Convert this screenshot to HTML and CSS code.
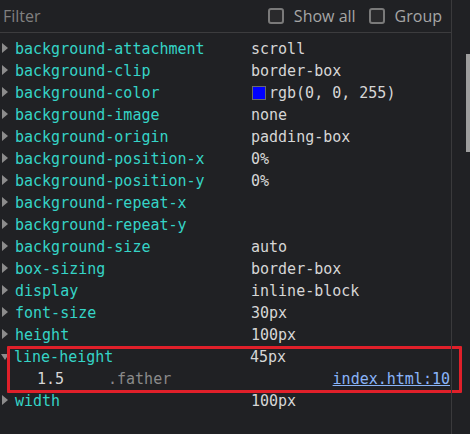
FILE: index.html
```html
<!DOCTYPE html>
<html>
<head>
<meta charset="utf-8">
<link rel="stylesheet" href="styles.css">
</head>
<body>
<div class="panel">
  <div class="main">
    <div class="toolbar">
      <span class="filter">Filter</span>
      <label class="check"><span class="box"></span>Show all</label>
      <label class="check"><span class="box"></span>Group</label>
    </div>
    <div class="list">
      <div class="row"><span class="tri"></span><span class="name">background-attachment</span><span class="val">scroll</span></div>
      <div class="row"><span class="tri"></span><span class="name">background-clip</span><span class="val">border-box</span></div>
      <div class="row"><span class="tri"></span><span class="name">background-color</span><span class="val"><span class="swatch"></span>rgb(0, 0, 255)</span></div>
      <div class="row"><span class="tri"></span><span class="name">background-image</span><span class="val">none</span></div>
      <div class="row"><span class="tri"></span><span class="name">background-origin</span><span class="val">padding-box</span></div>
      <div class="row"><span class="tri"></span><span class="name">background-position-x</span><span class="val">0%</span></div>
      <div class="row"><span class="tri"></span><span class="name">background-position-y</span><span class="val">0%</span></div>
      <div class="row"><span class="tri"></span><span class="name">background-repeat-x</span><span class="val"></span></div>
      <div class="row"><span class="tri"></span><span class="name">background-repeat-y</span><span class="val"></span></div>
      <div class="row"><span class="tri"></span><span class="name">background-size</span><span class="val">auto</span></div>
      <div class="row"><span class="tri"></span><span class="name">box-sizing</span><span class="val">border-box</span></div>
      <div class="row"><span class="tri"></span><span class="name">display</span><span class="val">inline-block</span></div>
      <div class="row"><span class="tri"></span><span class="name">font-size</span><span class="val">30px</span></div>
      <div class="row"><span class="tri"></span><span class="name">height</span><span class="val">100px</span></div>
      <div class="group">
        <div class="row"><span class="tri down"></span><span class="name">line-height</span><span class="val">45px</span></div>
        <div class="subrow"><span class="subval">1.5</span><span class="selector">.father</span><a class="link">index.html:10</a></div>
        <div class="highlight"></div>
      </div>
      <div class="row"><span class="tri"></span><span class="name">width</span><span class="val">100px</span></div>
    </div>
  </div>
  <div class="scroll"><div class="thumb"></div></div>
</div>
</body>
</html>
```
FILE: styles.css
```css
html, body {
  margin: 0;
  padding: 0;
  background: #202124;
  height: 100%;
}
.panel {
  display: flex;
  width: 470px;
  height: 434px;
  overflow: hidden;
}
.main {
  width: 451px;
  flex: none;
}
.scroll {
  flex: 1;
  border-left: 1px solid #3a3a3c;
  position: relative;
}
.thumb {
  position: absolute;
  left: 14px;
  top: 54px;
  width: 6px;
  height: 98px;
  background: #9e9e9e;
}
.toolbar {
  height: 33px;
  border-bottom: 1px solid #3c3c3e;
  display: flex;
  align-items: center;
  font-family: "Open Sans", "Noto Sans", sans-serif;
  font-size: 16px;
  color: #8f8f8f;
  box-sizing: border-box;
  padding-left: 3px;
}
.filter {
  flex: 1;
  color: #808080;
}
.check {
  display: flex;
  align-items: center;
  color: #a6a6a6;
  margin-right: 9px;
}
.check .box {
  width: 12px;
  height: 12px;
  border: 2px solid #7a7a7a;
  border-radius: 3px;
  margin-right: 10px;
  background: #2a2a2c;
}
.check + .check {
  margin-left: 4px;
}
.list {
  padding-top: 5px;
  font-family: "DejaVu Sans Mono", "Liberation Mono", monospace;
  font-size: 15px;
}
.row {
  display: flex;
  align-items: center;
  height: 22px;
}
.tri {
  width: 0;
  height: 0;
  border-top: 5px solid transparent;
  border-bottom: 5px solid transparent;
  border-left: 6px solid #8c8c8c;
  margin-left: 2px;
  margin-right: 7px;
  margin-top: -2px;
}
.tri.down {
  border-left: 4px solid transparent;
  border-right: 4px solid transparent;
  border-top: 6px solid #8c8c8c;
  border-bottom: 0;
  margin-left: 1px;
  margin-right: 5px;
  margin-top: 0;
}
.name {
  color: #35d4c7;
  width: 236px;
  flex: none;
}
.val {
  color: #d6d6d6;
  display: flex;
  align-items: center;
}
.swatch {
  width: 12px;
  height: 12px;
  background: #0000ff;
  border: 1px solid #6a6a6a;
  margin-right: 3px;
  margin-left: 1px;
}
.group {
  position: relative;
}
.subrow {
  display: flex;
  align-items: center;
  height: 22px;
  padding-left: 37px;
}
.subval {
  color: #d6d6d6;
  width: 71px;
}
.selector {
  color: #8a8a8a;
  flex: 1;
}
.link {
  color: #8ab4f8;
  text-decoration: underline;
  margin-right: 1px;
}
.highlight {
  position: absolute;
  left: 7px;
  top: 0;
  width: 449px;
  height: 41px;
  border: 3px solid #e0202a;
  border-radius: 1px;
  pointer-events: none;
}
```
